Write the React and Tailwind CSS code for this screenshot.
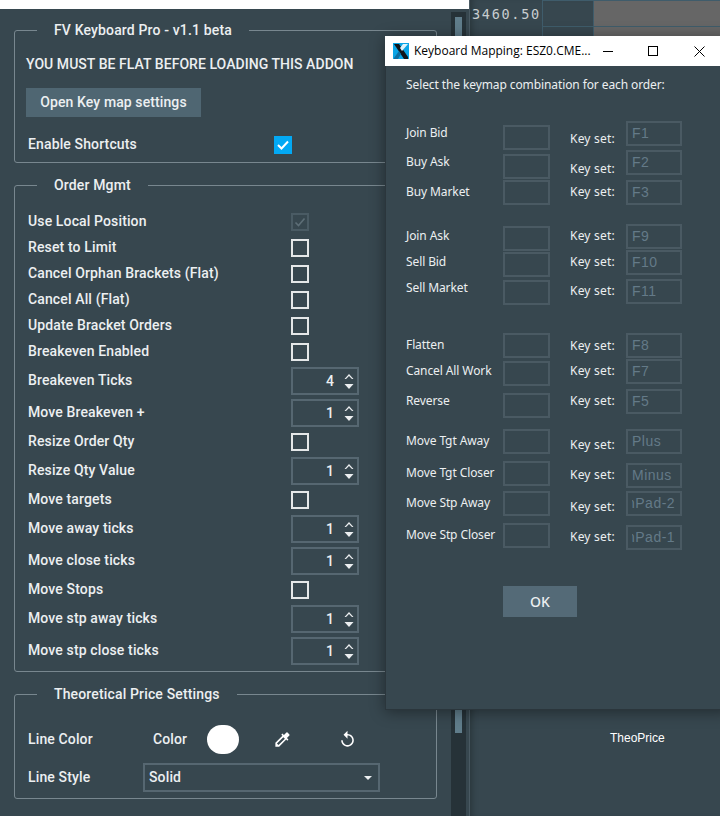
import React from "react";
import { MdColorize, MdReplay } from "react-icons/md";

const orderRows = [
  { label: "Use Local Position", type: "locked" },
  { label: "Reset to Limit", type: "check" },
  { label: "Cancel Orphan Brackets (Flat)", type: "check" },
  { label: "Cancel All (Flat)", type: "check" },
  { label: "Update Bracket Orders", type: "check" },
  { label: "Breakeven Enabled", type: "check" },
  { label: "Breakeven Ticks", type: "spin", value: 4 },
  { label: "Move Breakeven +", type: "spin", value: 1 },
  { label: "Resize Order Qty", type: "check" },
  { label: "Resize Qty Value", type: "spin", value: 1 },
  { label: "Move targets", type: "check" },
  { label: "Move away ticks", type: "spin", value: 1 },
  { label: "Move close ticks", type: "spin", value: 1 },
  { label: "Move Stops", type: "check" },
  { label: "Move stp away ticks", type: "spin", value: 1 },
  { label: "Move stp close ticks", type: "spin", value: 1 },
];

// gaps in the mapping dialog are uneven, so each cell carries its own top margin
const mapLabels = [
  ["Join Bid", "mt-[32px]"],
  ["Buy Ask", "mt-[13px]"],
  ["Buy Market", "mt-[14px]"],
  ["Join Ask", "mt-[28px]"],
  ["Sell Bid", "mt-[10px]"],
  ["Sell Market", "mt-[10px]"],
  ["Flatten", "mt-[41px]"],
  ["Cancel All Work", "mt-[10px]"],
  ["Reverse", "mt-[14px]"],
  ["Move Tgt Away", "mt-[24px]"],
  ["Move Tgt Closer", "mt-[16px]"],
  ["Move Stp Away", "mt-[14px]"],
  ["Move Stp Closer", "mt-[16px]"],
];

const mapInputs = [
  "mt-[32px]", "mt-[4px]", "mt-px", "mt-[21px]", "mt-px", "mt-[3px]", "mt-[28px]",
  "mt-[3px]", "mt-[7px]", "mt-[11px]", "mt-[7px]", "mt-[5px]", "mt-[7px]",
];

const keyLabels = [
  "mt-[38px]", "mt-[14px]", "mt-[7px]", "mt-[28px]", "mt-[10px]", "mt-[13px]", "mt-[39px]",
  "mt-[9px]", "mt-[14px]", "mt-[28px]", "mt-[14px]", "mt-[16px]", "mt-[14px]",
];

const keyInputs = [
  ["F1", "mt-[28px]"],
  ["F2", "mt-[4px]"],
  ["F3", "mt-[5px]"],
  ["F9", "mt-[19px]"],
  ["F10", "mt-px"],
  ["F11", "mt-[4px]"],
  ["F8", "mt-[29px]"],
  ["F7", "mt-px"],
  ["F5", "mt-[5px]"],
  ["Plus", "mt-[15px]"],
  ["Minus", "mt-[9px]"],
  ["nPad-2", "mt-[3px]", true],
  ["nPad-1", "mt-[9px]", true],
];

function Group({ title, className, children }) {
  return (
    <fieldset className={`mx-[14px] border border-[#78878f] rounded-[3px] ${className}`}>
      <legend className="ml-[22px] px-[17px] text-[14px] font-medium leading-[16px] text-[#eceff1] tracking-[0.15px]">
        {title}
      </legend>
      {children}
    </fieldset>
  );
}

function Checkbox({ locked }) {
  if (locked) {
    return (
      <span className="mt-[2px] flex h-[18px] w-[18px] items-center justify-center border-2 border-[#4a5b64]">
        <svg width="12" height="12" viewBox="0 0 12 12" fill="none">
          <path d="M1.5 6.5 L4.5 9.5 L10.5 2.5" stroke="#5d6e77" strokeWidth="1.6" />
        </svg>
      </span>
    );
  }
  return <span className="mt-[2px] block h-[18px] w-[18px] border-2 border-[#e4e7e8]" />;
}

function Spinner({ value }) {
  return (
    <div className="mt-[2px] flex h-[28px] w-[68px] items-center justify-end border-2 border-[#566771] text-[14px] font-medium text-[#eceff1]">
      <span className="mr-[10px]">{value}</span>
      <svg className="mr-[3px]" width="10" height="17" viewBox="0 0 10 17" fill="#eceff1">
        <path d="M5 1 L9.5 6 H8 L5 3 L2 6 H0.5 Z" />
        <path d="M0.5 11 H9.5 L5 16 Z" />
      </svg>
    </div>
  );
}

function OrderRow({ row }) {
  return (
    <div className={`flex items-center pl-[13px] ${row.type === "spin" ? "h-[32px]" : "h-[26px]"}`}>
      <span className="w-[263px] text-[14px] font-medium tracking-[0.13px] text-[#eceff1]">{row.label}</span>
      {row.type === "spin" ? <Spinner value={row.value} /> : <Checkbox locked={row.type === "locked"} />}
    </div>
  );
}

function WindowIcon() {
  return (
    <svg width="16" height="16" viewBox="0 0 16 16">
      <rect width="16" height="16" fill="#0aa5e6" />
      <path d="M1 1 L6 1 L15 14 L15 16 L11 16 Z" fill="#10151a" />
      <path d="M15 1 L10 1 L7 5 L9 8 Z" fill="#dff3fb" />
      <path d="M1 15 L6 8 L8 11 L5 16 L1 16 Z" fill="#0c6fa3" />
    </svg>
  );
}

function KeyMapDialog() {
  return (
    <div className="absolute left-[385px] top-[36px] flex h-[674px] w-[345px] flex-col shadow-[0_2px_14px_rgba(0,0,0,0.4)] font-['Noto_Sans',sans-serif]">
      <div className="flex h-[30px] shrink-0 items-center bg-white pl-[8px] text-black">
        <WindowIcon />
        <span className="ml-[5px] w-[174px] whitespace-nowrap font-['Open_Sans',sans-serif] text-[12px]">Keyboard Mapping: ESZ0.CME...</span>
        <span className="ml-[15px] block h-px w-[10px] bg-black" />
        <span className="ml-[35px] block h-[10px] w-[10px] border border-black" />
        <svg className="ml-[36px]" width="11" height="11" viewBox="0 0 11 11" stroke="black" fill="none">
          <path d="M0.5 0.5 L10.5 10.5 M10.5 0.5 L0.5 10.5" />
        </svg>
      </div>

      <div className="flex-1 border-l border-b border-[#2b363c] bg-[#37474f]">
        <p className="ml-[20px] mt-[11px] h-[16px] text-[12px] leading-[16px] tracking-[-0.1px] text-[#eceff1] whitespace-nowrap">
          Select the keymap combination for each order:
        </p>

        <div className="flex">
          <div className="ml-[20px] w-[97px] text-[12px] leading-[16px] tracking-[-0.1px] text-[#eceff1]">
            {mapLabels.map(([text, mt]) => (
              <div key={text} className={`h-[16px] whitespace-nowrap ${mt}`}>{text}</div>
            ))}
          </div>
          <div className="w-[67px]">
            {mapInputs.map((mt, i) => (
              <div key={i} className={`h-[25px] w-[47px] border-2 border-[#4a5a63] ${mt}`} />
            ))}
          </div>
          <div className="w-[56px] text-[12px] leading-[16px] tracking-[0.2px] text-[#eceff1]">
            {keyLabels.map((mt, i) => (
              <div key={i} className={`h-[16px] whitespace-nowrap ${mt}`}>Key set:</div>
            ))}
          </div>
          <div className="w-[56px] text-[14px] leading-[21px] tracking-[0.5px] text-[#647a88]">
            {keyInputs.map(([text, mt, clip]) => (
              <div key={text} className={`h-[25px] w-[56px] border-2 border-[#4a5a63] pl-[4px] font-['Liberation_Sans',sans-serif] ${mt}`}>
                <div className="overflow-hidden">
                  <span className={`block whitespace-nowrap ${clip ? "-ml-[5px]" : ""}`}>{text}</span>
                </div>
              </div>
            ))}
          </div>
        </div>

        <button className="ml-[117px] mt-[36px] h-[31px] w-[74px] bg-[#546a77] text-[14px] font-medium text-[#eceff1]">
          OK
        </button>
      </div>
    </div>
  );
}

function ChartStrip() {
  return (
    <div className="flex h-[36px]">
      <div className="w-[72px] pl-[2px] pt-[5px] font-['DejaVu_Sans_Mono',monospace] text-[13.5px] leading-[18px] tracking-[1.7px] text-[#c8cdcf] whitespace-nowrap">
        3460.50
      </div>
      <div className="flex w-[51px] flex-col border-l border-t border-[#3f5c6b]">
        <div className="h-[26px] border-b border-[#3f5c6b]" />
      </div>
      <div className="flex flex-1 flex-col border-l border-t border-[#3f5c6b]">
        <div className="h-[26px] border-b border-[#3f5c6b] bg-[#666666]" />
        <div className="flex-1 bg-[#666666]" />
      </div>
    </div>
  );
}

export default function App() {
  return (
    <div className="relative flex h-[816px] w-[720px] overflow-hidden bg-[#37474f] font-['Roboto',sans-serif]">
      <div className="flex h-full w-[470px] shrink-0 flex-col border-r border-[#4a5a63]">
        <div className="h-[9px] shrink-0 bg-white" />
        <div className="flex flex-1">
          <div className="w-[451px] shrink-0 pt-[13px]">
            <Group title="FV Keyboard Pro - v1.1 beta" className="h-[141px]">
              <div className="ml-[11px] mt-[16px] text-[14px] font-medium leading-[20px] tracking-[0.05px] text-[#eceff1] whitespace-nowrap">
                YOU MUST BE FLAT BEFORE LOADING THIS ADDON
              </div>
              <button className="ml-[11px] mt-[14px] block h-[29px] w-[175px] bg-[#4f6672] text-[14px] font-medium tracking-[0.1px] text-[#eceff1]">
                Open Key map settings
              </button>
              <div className="mt-[15px] flex h-[24px] items-center pl-[13px]">
                <span className="w-[246px] text-[14px] font-medium tracking-[0.13px] text-[#eceff1]">Enable Shortcuts</span>
                <span className="mt-[2px] flex h-[18px] w-[18px] items-center justify-center bg-[#03a9f4]">
                  <svg width="12" height="10" viewBox="0 0 12 10" fill="none">
                    <path d="M1 5 L4.5 8.5 L11 1.5" stroke="white" strokeWidth="2" />
                  </svg>
                </span>
              </div>
            </Group>
            <Group title="Order Mgmt" className="mt-[14px] h-[495px]">
              <div className="mt-[15px]">
                {orderRows.map((row) => (
                  <OrderRow key={row.label} row={row} />
                ))}
              </div>
            </Group>
            <Group title="Theoretical Price Settings" className="mt-[14px] h-[113px]">
              <div className="mt-[20px] flex h-[35px] items-center pl-[13px] text-[14px] font-medium tracking-[0.13px] text-[#eceff1]">
                <span className="w-[125px]">Line Color</span>
                <span className="w-[54px]">Color</span>
                <span className="block h-[29px] w-[32px] rounded-full bg-white" />
                <MdColorize className="ml-[34px] text-[19px] text-white" />
                <MdReplay className="ml-[46px] text-[19px] text-white" />
              </div>
              <div className="mt-[6px] flex items-center pl-[13px] text-[14px] font-medium tracking-[0.13px] text-[#eceff1]">
                <span className="w-[115px]">Line Style</span>
                <div className="flex h-[29px] w-[237px] items-center justify-between border-2 border-[#566771] pl-[4px] pr-[6px]">
                  <span>Solid</span>
                  <span className="h-0 w-0 border-x-[4px] border-t-[4px] border-x-transparent border-t-[#eceff1]" />
                </div>
              </div>
            </Group>
          </div>
          <div className="mt-[3px] w-[15px] shrink-0 bg-[#263238] px-[4px]">
            <div className="mt-[5px] h-[716px] w-[7px] bg-[#607d8b]" />
          </div>
        </div>
      </div>
      <div className="flex-1 shadow-[inset_6px_0_6px_-4px_rgba(0,0,0,0.25)]">
        <ChartStrip />
        <div className="mt-[694px] pl-[140px] text-[12px] font-['Liberation_Sans',sans-serif] leading-[16px] text-white">TheoPrice</div>
      </div>
      <KeyMapDialog />
    </div>
  );
}
